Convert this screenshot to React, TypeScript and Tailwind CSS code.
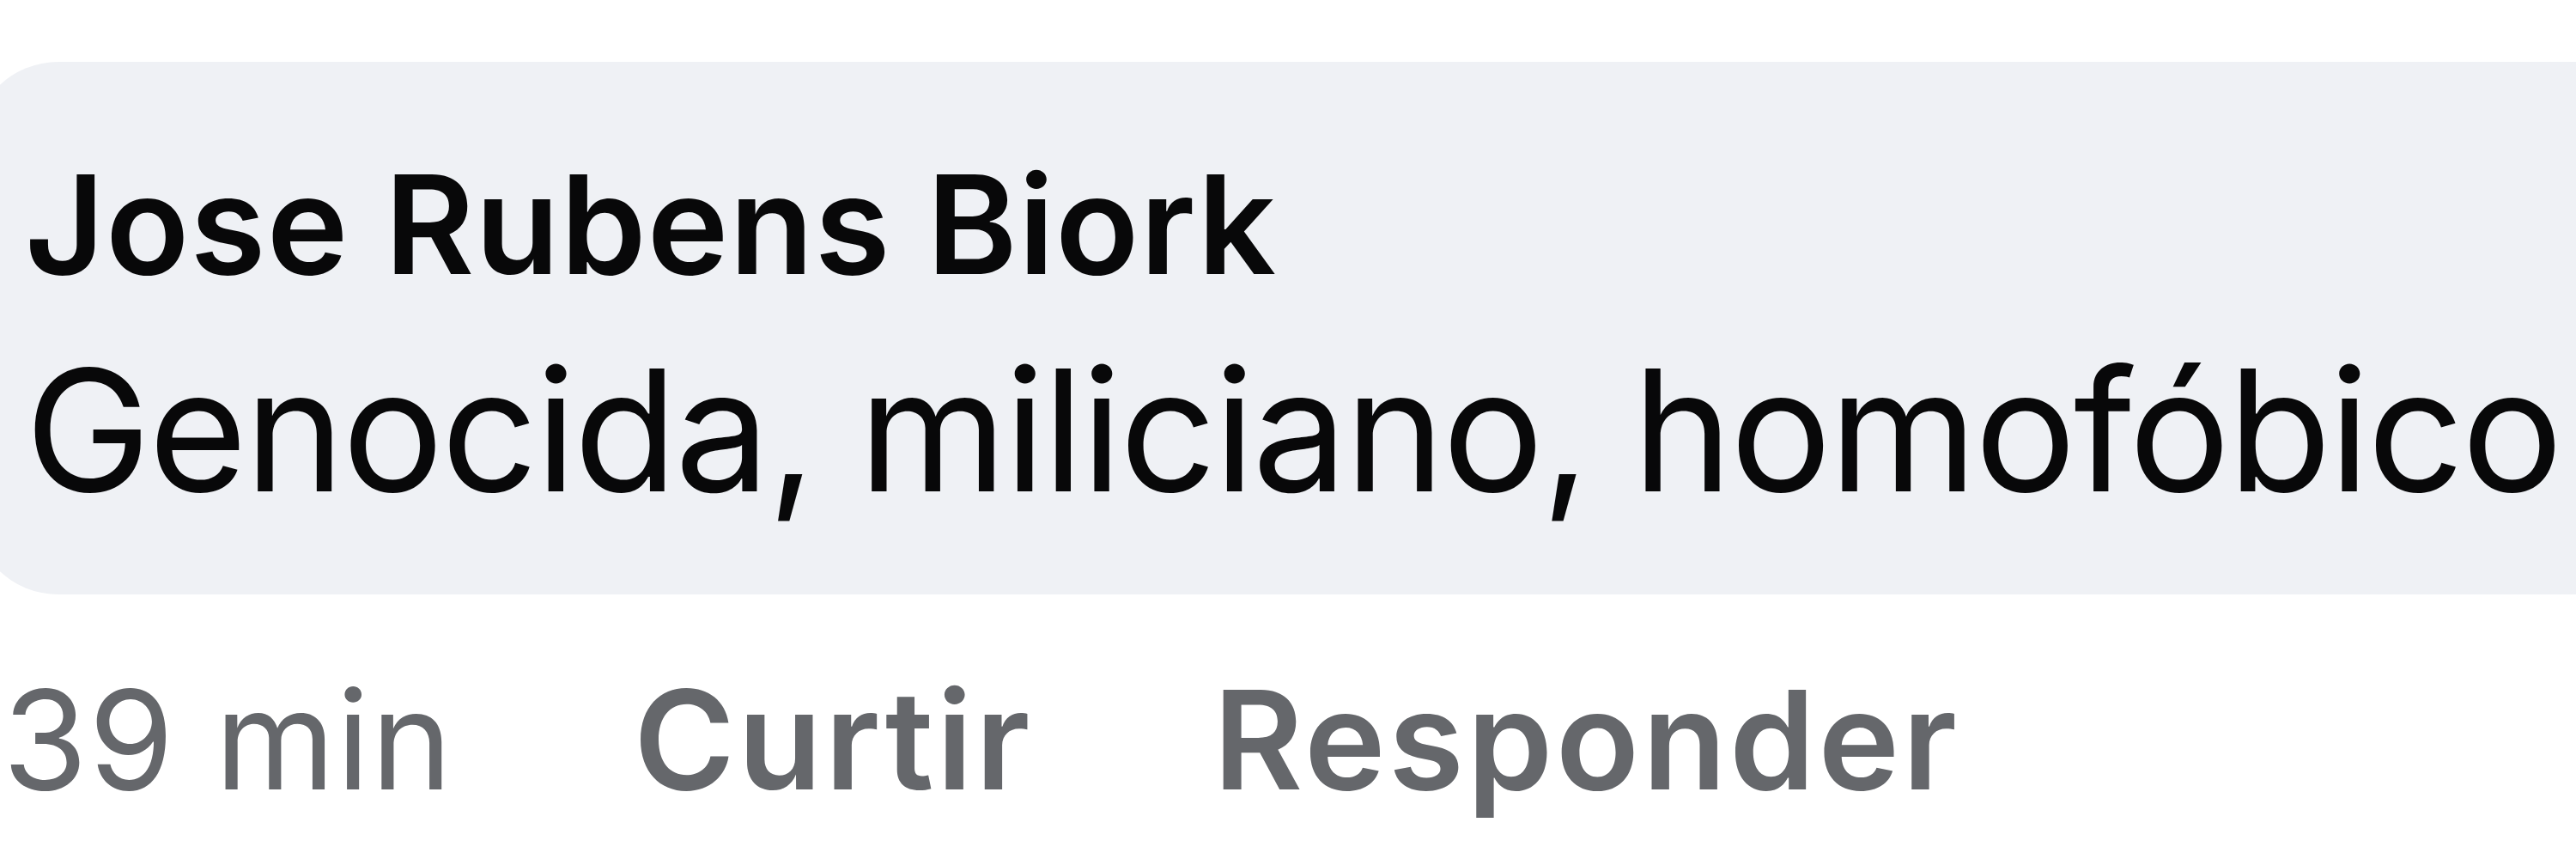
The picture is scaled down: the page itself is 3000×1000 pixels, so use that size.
const actions = ['Curtir', 'Responder'];

export default function App() {
  return (
    <main className="h-[1000px] w-[3000px] overflow-hidden bg-white pt-[72px] font-['Inter',sans-serif] whitespace-nowrap">
      <article>
        {/* Comment bubble */}
        <div className="-ml-[32px] h-[620px] w-[3200px] rounded-[100px] bg-[#eff1f5] pt-[109px] pl-[61px] text-[#080809]">
          <h2 className="h-[210px] text-[160px] leading-[160px] font-semibold tracking-[1.2px]">
            Jose Rubens Biork
          </h2>
          <p className="text-[197px] leading-[219px] tracking-[-2.9px]">Genocida, miliciano, homofóbico</p>
        </div>

        {/* Footer actions */}
        <footer className="flex gap-[210px] pt-[74px] pl-[3px] text-[160px] leading-[190px] text-[#65676b]">
          <span className="tracking-[1.4px]">39 min</span>
          {actions.map((action) => (
            <button key={action} className="font-semibold tracking-[3.5px]">
              {action}
            </button>
          ))}
        </footer>
      </article>
    </main>
  );
}
